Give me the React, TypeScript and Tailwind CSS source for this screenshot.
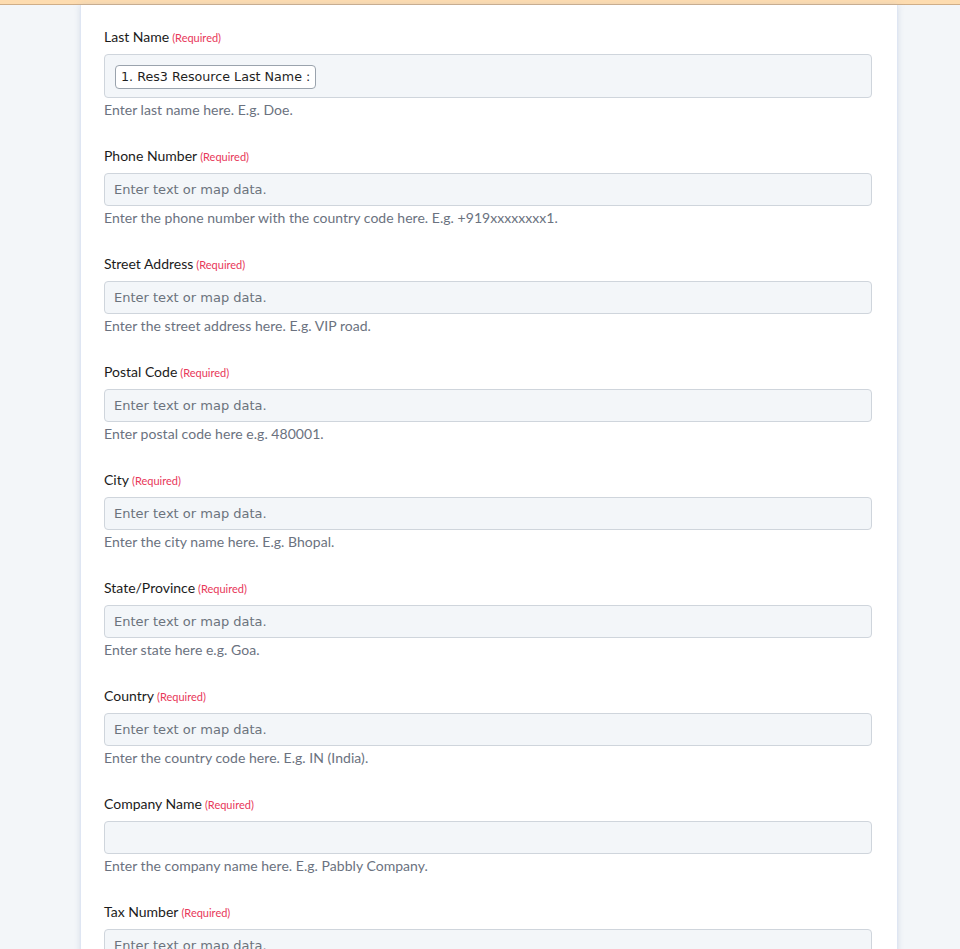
import React from 'react';

type Field = {
  label: string;
  help: string;
  placeholder?: string;
  token?: string;
};

const fields: Field[] = [
  { label: 'Last Name', help: 'Enter last name here. E.g. Doe.', token: '1. Res3 Resource Last Name :' },
  { label: 'Phone Number', help: 'Enter the phone number with the country code here. E.g. +919xxxxxxxx1.', placeholder: 'Enter text or map data.' },
  { label: 'Street Address', help: 'Enter the street address here. E.g. VIP road.', placeholder: 'Enter text or map data.' },
  { label: 'Postal Code', help: 'Enter postal code here e.g. 480001.', placeholder: 'Enter text or map data.' },
  { label: 'City', help: 'Enter the city name here. E.g. Bhopal.', placeholder: 'Enter text or map data.' },
  { label: 'State/Province', help: 'Enter state here e.g. Goa.', placeholder: 'Enter text or map data.' },
  { label: 'Country', help: 'Enter the country code here. E.g. IN (India).', placeholder: 'Enter text or map data.' },
  { label: 'Company Name', help: 'Enter the company name here. E.g. Pabbly Company.', placeholder: '' },
  { label: 'Tax Number', help: 'Enter the tax number here.', placeholder: 'Enter text or map data.' },
];

const FieldRow = ({ field }: { field: Field }) => (
  <div className="mb-[27px]">
    <label className="block h-5 leading-[18px] text-[14px] text-[#1b1b1b] mb-[6px] font-['Lato',sans-serif]">
      {field.label}
      <span className="ml-[3px] text-[11px] text-[#e8385a]">(Required)</span>
    </label>
    {field.token ? (
      <div className="h-[44px] flex items-center px-[10px] pt-px rounded-[4px] border border-[#cfd5dc] bg-[#f3f6f9]">
        <span className="h-[24px] flex items-center px-[5px] rounded-[4px] border border-[#9aa3ad] bg-white text-[12.7px] text-[#1f1f1f] font-['DejaVu_Sans',sans-serif]">
          {field.token}
        </span>
      </div>
    ) : (
      <div className="h-[33px] flex items-center px-[9px] rounded-[4px] border border-[#cfd5dc] bg-[#f3f6f9] text-[13px] text-[#6b737d] font-['DejaVu_Sans',sans-serif]">
        {field.placeholder}
      </div>
    )}
    <p className="mt-[2px] h-5 leading-5 text-[14px] tracking-[0.04px] text-[#6b7280] font-['Lato',sans-serif]">{field.help}</p>
  </div>
);

export default function App() {
  return (
    <div className="h-[949px] overflow-hidden bg-[#f3f6f9]">
      <div className="h-[5px] bg-[#fddcb0] border-b border-[#cfae88]" />
      <div className="ml-[80px] w-[818px] min-h-[944px] bg-white border-x border-[#dfe6f3] shadow-[0_0_6px_rgba(160,175,200,0.35)] pl-[23px] pr-[25px] pt-[23px]">
        {fields.map((f) => (
          <FieldRow key={f.label} field={f} />
        ))}
      </div>
    </div>
  );
}
